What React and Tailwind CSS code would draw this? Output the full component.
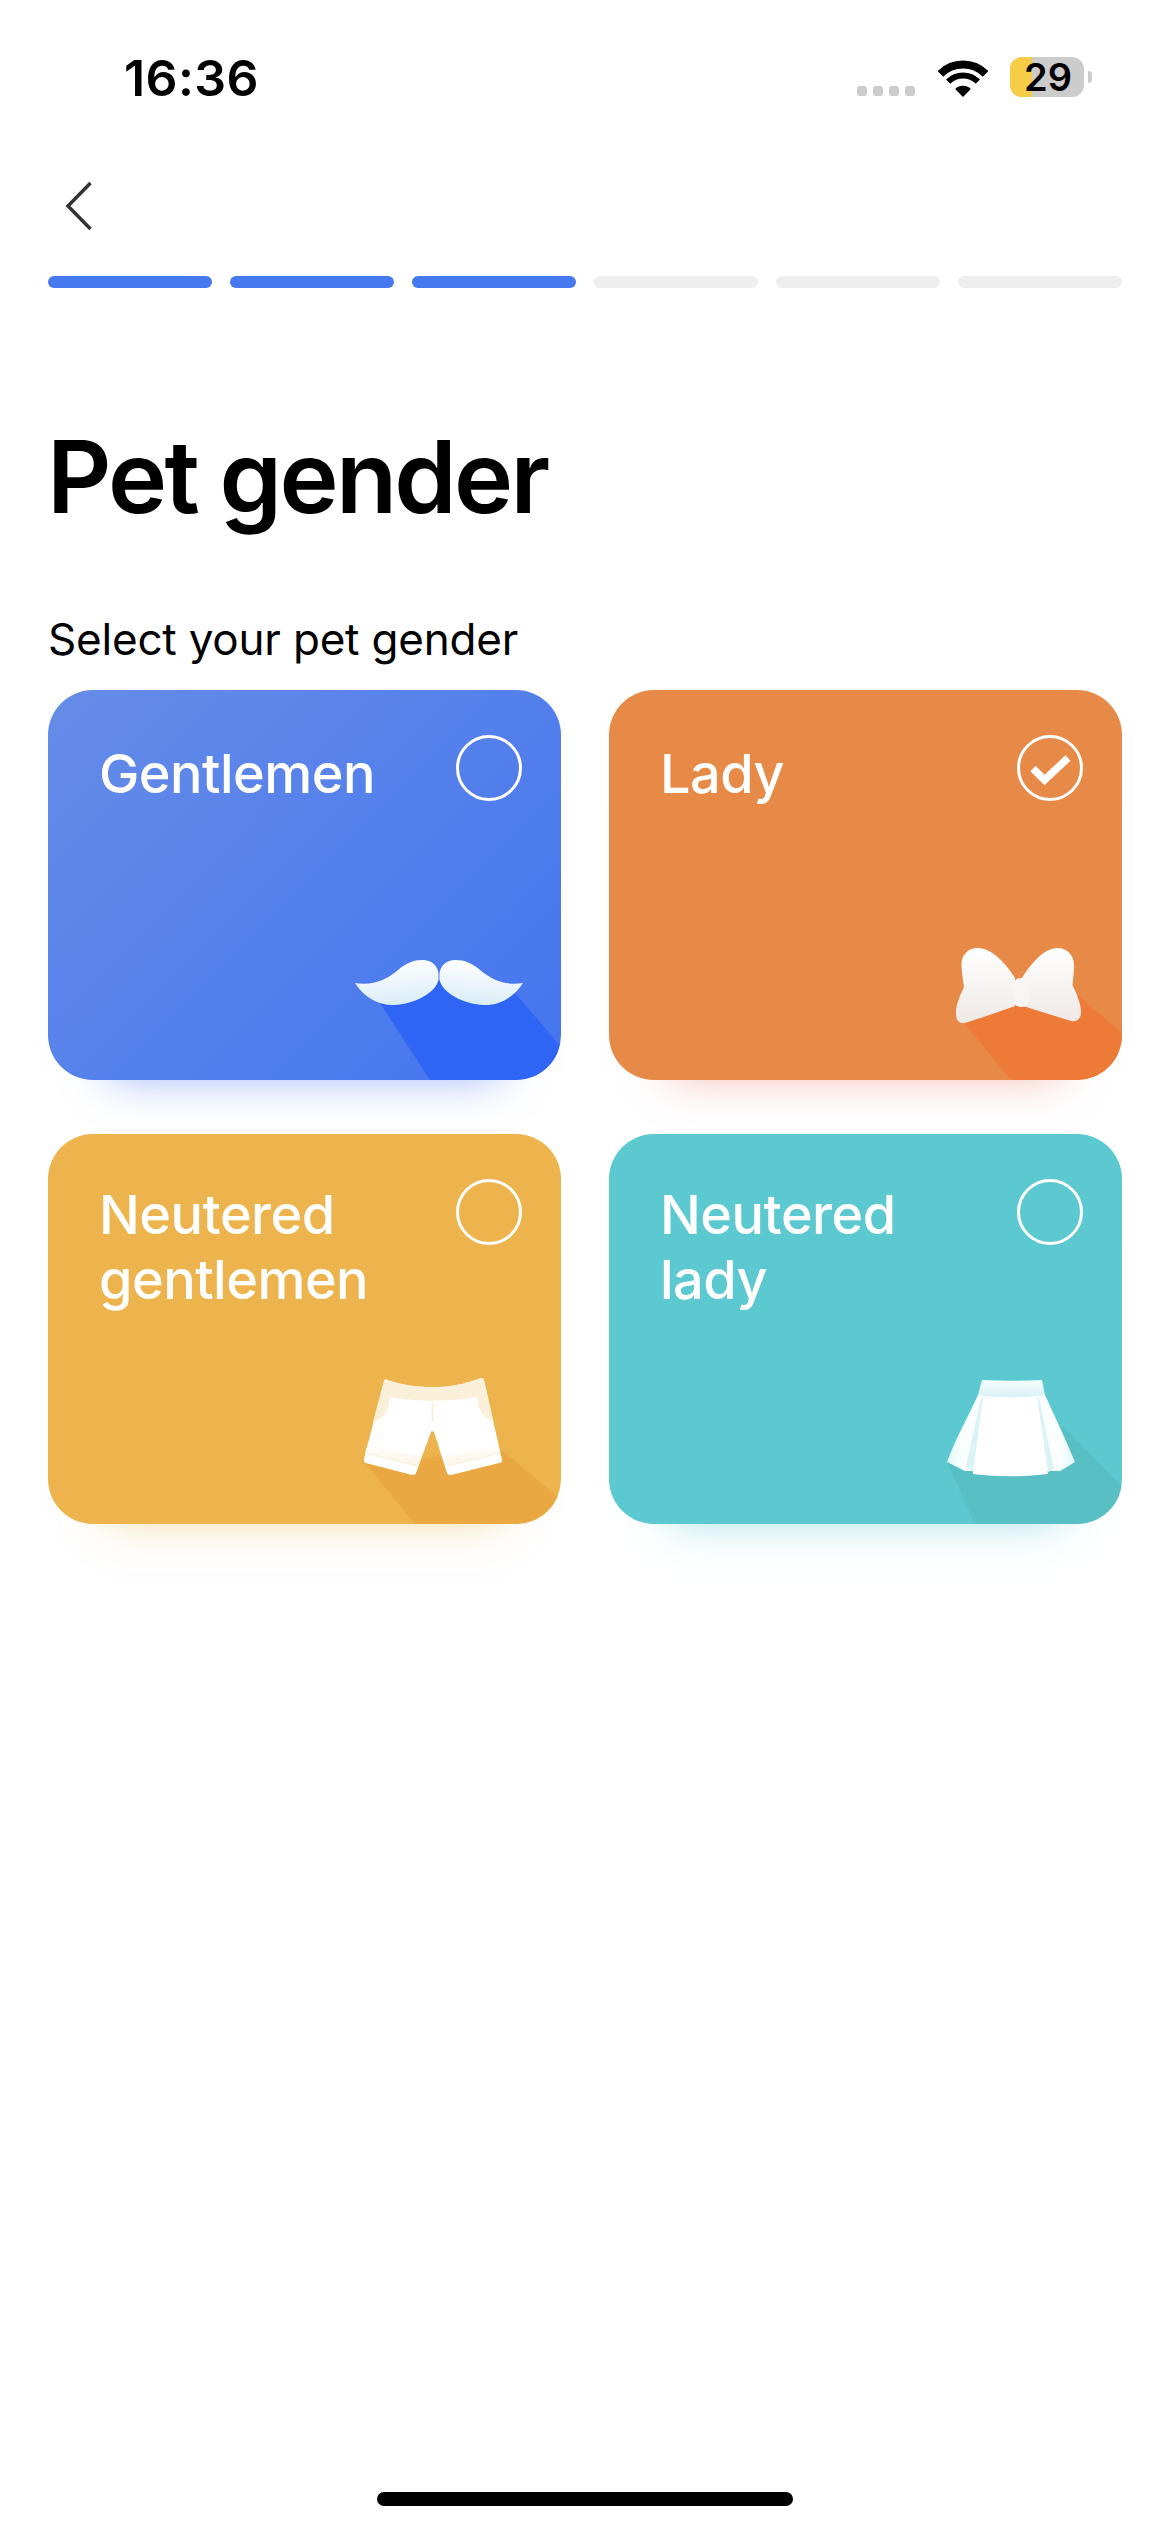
import React from "react";

const STEPS = [true, true, true, false, false, false];

function WifiIcon() {
  return (
    <svg width="50" height="37" viewBox="0 0 50 37" fill="none">
      <path d="M2.4 13.9A32 32 0 0 1 47.6 13.9" stroke="#000" strokeWidth="8" />
      <path d="M10.15 21.65A21 21 0 0 1 39.85 21.65" stroke="#000" strokeWidth="6" />
      <path d="M25 37L17.2 29A10.9 10.9 0 0 1 32.8 29Z" fill="#000" />
    </svg>
  );
}

function Radio({ checked }) {
  return (
    <svg width="66" height="66" viewBox="0 0 66 66" fill="none" className="shrink-0">
      <circle cx="33" cy="33" r="31.5" stroke="#fff" strokeWidth="3" />
      {checked && <path d="M16 33.5L27.5 45L51 23" stroke="#fff" strokeWidth="7.5" />}
    </svg>
  );
}

// Illustrations use card coordinates (513 x 390) so the long shadow clips at the card edge
function Mustache() {
  return (
    <svg className="absolute inset-0" width="513" height="390" viewBox="0 0 513 390" fill="none">
      <defs>
        <linearGradient id="mL" x1="0.6" y1="0" x2="0.75" y2="1">
          <stop offset="0" stopColor="#ffffff" />
          <stop offset="1" stopColor="#d8ecf8" />
        </linearGradient>
        <linearGradient id="mR" x1="0.4" y1="0" x2="0.25" y2="1">
          <stop offset="0" stopColor="#ffffff" />
          <stop offset="1" stopColor="#d8ecf8" />
        </linearGradient>
      </defs>
      <path d="M330 310L382 390H513V357L467 303L391 290Z" fill="#2f65f5" />
      <path d="M307 293C325 296 338 290 350 280C358 273 366 270 374 270C384 270 390 276 390.5 284V290C388 300 375 310 355 314C335 318 318 310 307 293Z" fill="url(#mL)" />
      <path d="M475 293C457 296 444 290 432 280C424 273 416 270 408 270C398 270 392 276 391.5 284V290C394 300 407 310 427 314C447 318 464 310 475 293Z" fill="url(#mR)" />
    </svg>
  );
}

function Bow() {
  return (
    <svg className="absolute inset-0" width="513" height="390" viewBox="0 0 513 390" fill="none">
      <defs>
        <linearGradient id="bow" x1="0" y1="0" x2="0" y2="1">
          <stop offset="0" stopColor="#ffffff" />
          <stop offset="1" stopColor="#efe9e6" />
        </linearGradient>
      </defs>
      <path d="M354 332L402 390H513V343L471 307L410 310Z" fill="#ee7a38" />
      <path d="M406 288C396 272 382 258 369 258C358 258 352 266 352.500 276C353 284 354 290 355 297C351 306 347 314 347 323C347 330 350 334 356 333C372 328 390 322 406 316Z" fill="url(#bow)" />
      <path d="M413 288C423 272 436 258 448 258C459 258 465 266 465 275C465 283 464 289 463.500 295C468 305 472 314 472 322C472 329 468 332 462 331C446 326 430 321 414 316Z" fill="url(#bow)" />
      <rect x="404" y="288" width="16" height="29" rx="7.5" fill="#f8f5f4" />
    </svg>
  );
}

function Shorts() {
  return (
    <svg className="absolute inset-0" width="513" height="390" viewBox="0 0 513 390" fill="none">
      <defs>
        <linearGradient id="hem" x1="0" y1="0" x2="0" y2="1">
          <stop offset="0" stopColor="#ffffff" />
          <stop offset="1" stopColor="#fcf5e4" />
        </linearGradient>
      </defs>
      <path d="M318 330L367 390H513V366L454 316Z" fill="#eaa843" />
      <path d="M339 246C370 256 402 256 433 244C435 244 436 245 436 246L454 326C454 328 453 329 451 329L403 341C401 341 400 341 399 339L386 298C385 297 383 297 383 298L368 339C367 341 366 341 364 341L318 329C316 328 316 327 316 325L336 247C336 246 338 245 339 246Z" fill="#fff" />
      <path d="M339 246C370 256 402 256 433 244C435 244 436 245 436 246L445 286C436 286 431 278 429 263C400 268 370 268 342 263C340 278 335 286 325 288L336 247C336 246 338 245 339 246Z" fill="#faf0d9" />
      <path d="M384.500 268V288" stroke="#faf0d9" strokeWidth="2" />
      <path d="M320 310L317 319L370 332L373 323Z" fill="url(#hem)" />
      <path d="M449 310L452 319L399 332L396 323Z" fill="url(#hem)" />
      <path d="M317 319L370 332M452 319L399 332" stroke="#f8edd6" strokeWidth="1" />
    </svg>
  );
}

function Skirt() {
  return (
    <svg className="absolute inset-0" width="513" height="390" viewBox="0 0 513 390" fill="none">
      <defs>
        <linearGradient id="waist" x1="0" y1="0" x2="0" y2="1">
          <stop offset="0" stopColor="#f4fcfd" />
          <stop offset="1" stopColor="#d9f2f5" />
        </linearGradient>
        <linearGradient id="side" x1="0" y1="0" x2="1" y2="0">
          <stop offset="0" stopColor="#e0f6f8" />
          <stop offset="0.12" stopColor="#fbfefe" />
          <stop offset="0.88" stopColor="#fbfefe" />
          <stop offset="1" stopColor="#e0f6f8" />
        </linearGradient>
      </defs>
      <path d="M338 328L366 390H513V353L454 292Z" fill="#58bfc5" />
      <path d="M369 261C358 285 347 304 338 328L356 337H451L466 328C456 304 447 285 436 261Z" fill="url(#side)" />
      <path d="M372 264L357 332L364 338L376 263ZM428 263L439 338L445 335L430 264Z" fill="#dcf3f6" />
      <path d="M374 263C392 265 410 265 428 263L439 340C415 343 388 343 364 340Z" fill="#fff" />
      <path d="M373 246C393 247 413 247 433 246L436 261C414 264 390 264 369 261Z" fill="url(#waist)" />
    </svg>
  );
}

function GenderCard({ title, bg, shadow, checked, titleTop, children }) {
  return (
    <div className={`relative h-[390px] rounded-[45px] ${bg} ${shadow}`}>
      <div className="absolute inset-0 rounded-[45px] overflow-hidden">{children}</div>
      <div className="relative flex items-start justify-between pl-[51px] pr-[39px] pt-[45px]">
        <h3 className={`${titleTop} text-[54px] leading-[65px] font-medium tracking-[-0.5px] text-white whitespace-pre-line`}>{title}</h3>
        <Radio checked={checked} />
      </div>
    </div>
  );
}

export default function App() {
  return (
    <div className="relative flex flex-col w-[1170px] min-h-[2532px] bg-white text-black font-['Inter',sans-serif]">
      {/* status bar */}
      <div className="flex items-start justify-between h-[154px] pl-[124px] pr-[78px] pt-[48px]">
        <span className="text-[50px] leading-[60px] font-semibold tracking-[0.4px]">16:36</span>
        <div className="flex items-end mt-[9px]">
          <div className="flex gap-[6px] mb-[1px]">
            {[0, 1, 2, 3].map((i) => (
              <span key={i} className="w-[10px] h-[10px] rounded-[3px] bg-[#cccccc]" />
            ))}
          </div>
          <div className="ml-[23px]">
            <WifiIcon />
          </div>
          <div className="ml-[22px] flex items-center">
            <div className="relative w-[74px] h-[40px] rounded-[12px] bg-[#cccccc]">
              <div className="absolute inset-y-0 left-0 w-[22px] rounded-l-[12px] bg-[#f5cd47]" />
              <span className="relative flex items-center justify-center h-full pl-[2px] text-[38px] leading-[40px] font-semibold">29</span>
            </div>
            <div className="ml-[4px] w-[4px] h-[12px] rounded-r-full bg-[#cccccc]" />
          </div>
        </div>
      </div>

      {/* back */}
      <div className="flex items-center h-[122px] pl-[65px] pb-[18px]">
        <svg width="28" height="50" viewBox="0 0 28 50" fill="none">
          <path d="M25.500 2L3 25L25.500 48" stroke="#333333" strokeWidth="3.5" />
        </svg>
      </div>

      {/* progress */}
      <div className="flex gap-[18px] px-[48px]">
        {STEPS.map((on, i) => (
          <div key={i} className={`h-[12px] flex-1 rounded-full ${on ? "bg-[#4678ef]" : "bg-[#eeeeee]"}`} />
        ))}
      </div>

      <div className="px-[48px]">
        <h1 className="mt-[129px] -ml-[1px] text-[100px] leading-[120px] font-semibold tracking-[-2.7px]">Pet gender</h1>
        <p className="mt-[74px] text-[44px] leading-[56px] tracking-[-0.2px]">Select your pet gender</p>

        <div className="mt-[23px] grid grid-cols-2 gap-x-[48px] gap-y-[54px]">
          <GenderCard
            title="Gentlemen"
            titleTop="mt-[6px]"
            bg="bg-[linear-gradient(135deg,#668ce8,#4375ee)]"
            shadow="shadow-[0_56px_44px_-62px_rgba(70,120,239,0.65)]"
          >
            <Mustache />
          </GenderCard>
          <GenderCard
            title="Lady"
            titleTop="mt-[6px]"
            checked
            bg="bg-[#e78a47]"
            shadow="shadow-[0_56px_44px_-62px_rgba(231,110,90,0.55)]"
          >
            <Bow />
          </GenderCard>
          <GenderCard
            title={"Neutered\ngentlemen"}
            titleTop="mt-[3px]"
            bg="bg-[#edb44d]"
            shadow="shadow-[0_56px_44px_-62px_rgba(237,190,90,0.65)]"
          >
            <Shorts />
          </GenderCard>
          <GenderCard
            title={"Neutered\nlady"}
            titleTop="mt-[3px]"
            bg="bg-[#5cc8cf]"
            shadow="shadow-[0_56px_44px_-62px_rgba(92,200,207,0.65)]"
          >
            <Skirt />
          </GenderCard>
        </div>
      </div>

      {/* home indicator */}
      <div className="mt-auto mb-[26px] mx-auto w-[416px] h-[14px] rounded-full bg-black" />
    </div>
  );
}
